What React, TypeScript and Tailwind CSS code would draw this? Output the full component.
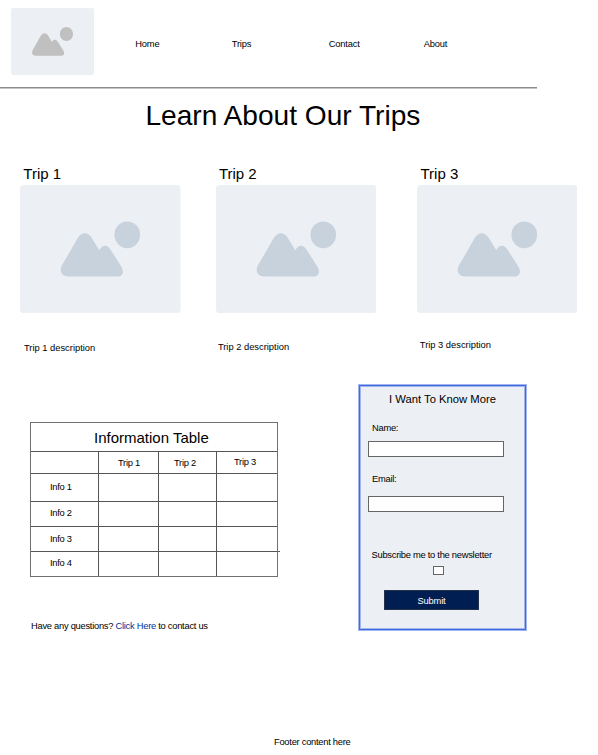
function Placeholder({ className, shape }: { className: string; shape: string }) {
  return (
    <svg viewBox="0 0 482 384" preserveAspectRatio="none" className={`block shrink-0 ${className}`}>
      <rect width="482" height="384" rx="12" fill="#eceff4" />
      <g className={shape}>
        <path d="M146 274C124 274 116 257 127 239L172 161C184 139 205 139 217 161L238 195C247 178 261 178 271 192L304 244C314 260 308 274 293 274Z" />
        <ellipse cx="322" cy="149" rx="38.5" ry="40" />
      </g>
    </svg>
  );
}

const trips = [
  { name: "Trip 1", card: "ml-[20.3px]", title: "ml-[3px]", text: "ml-[3.7px] mt-[29px]" },
  { name: "Trip 2", card: "ml-[35px]", title: "ml-[3px]", text: "ml-[2px] mt-[28px]" },
  { name: "Trip 3", card: "ml-[40.3px]", title: "ml-[3.7px]", text: "ml-[3px] mt-[26px]" },
];

const rows = [
  { name: "Info 1", size: "h-[28px]", pad: "pt-[7px]" },
  { name: "Info 2", size: "h-[25px]", pad: "pt-[5px]" },
  { name: "Info 3", size: "h-[25px]", pad: "pt-[6px]" },
  { name: "Info 4", size: "h-[25px]", pad: "pt-[5px]" },
];

function InfoTable() {
  return (
    <section className="relative mt-[38px] ml-[30px] h-[155px] w-[248px] shrink-0 border border-[#707070]">
      <h2 className="h-[28px] pt-[6px] pl-[63px] text-[15px] leading-[18px] tracking-normal">Information Table</h2>
      <div className="flex h-[22px] border-t border-[#555]">
        <div className="w-[67px]" />
        <div className="w-[60px] border-l border-[#555] pt-[5px] pl-[19px]">Trip 1</div>
        <div className="w-[58px] border-l border-[#555] pt-[5px] pl-[15px]">Trip 2</div>
        <div className="grow border-l border-[#555] pt-[4px] pl-[17px]">Trip 3</div>
      </div>
      {rows.map((row) => (
        <div key={row.name} className={`flex border-t border-[#555] ${row.size}`}>
          <div className={`w-[67px] pl-[19px] ${row.pad}`}>{row.name}</div>
          <div className="w-[60px] border-l border-[#555]" />
          <div className="w-[58px] border-l border-[#555]" />
          <div className="grow border-l border-[#555]" />
        </div>
      ))}
      <div className="absolute top-[128px] -right-[3px] h-px w-[2px] bg-[#555]" />
    </section>
  );
}

function ContactForm() {
  return (
    <form className="h-[247px] w-[169px] shrink-0 border border-[#a0b4f0] bg-[#eceff4]">
      <div className="h-full border border-[#4169e1]">
        <div className="flex h-full flex-col border border-[#a0b4ee]">
          <h2 className="mt-[5px] ml-[28px] text-[11.25px] leading-[14px] tracking-normal">I Want To Know More</h2>
          <label htmlFor="name" className="mt-[16px] ml-[11px]">Name:</label>
          <input id="name" className="mt-[7px] ml-[7px] h-[16px] w-[136px] border border-[#666] bg-white" />
          <label htmlFor="email" className="mt-[16px] ml-[11px]">Email:</label>
          <input id="email" className="mt-[11px] ml-[7px] h-[16px] w-[136px] border border-[#666] bg-white" />
          <label htmlFor="news" className="mt-[37px] ml-[10.5px]">Subscribe me to the newsletter</label>
          <input id="news" type="checkbox" className="mt-[5px] ml-[72px] h-[9px] w-[11px] appearance-none border border-[#666] bg-white" />
          <button type="button" className="mt-[15px] ml-[23px] h-[20px] w-[95px] border border-[#26324a] bg-[#001e52] pt-[2px] tracking-[-0.15px] text-white">
            Submit
          </button>
        </div>
      </div>
    </form>
  );
}

export default function App() {
  return (
    <div className="flex h-[755px] w-[598px] flex-col overflow-hidden bg-white font-['Liberation_Sans',Arial,sans-serif] text-[9.33px] leading-[12px] tracking-[-0.26px] whitespace-nowrap text-black">
      <header className="flex h-[89px] w-[537px] shrink-0 border-b border-[#c4c4c4]">
        <div className="flex grow border-b border-[#8c8c8c]">
          <Placeholder className="mt-[8.3px] ml-[11px] h-[67px] w-[83px]" shape="fill-[#c0c0c0]" />
          <nav className="flex pt-[38px] pl-[41.3px] tracking-[-0.2px]">
            <a className="w-[96.5px]">Home</a>
            <a className="w-[97px]">Trips</a>
            <a className="w-[95px]">Contact</a>
            <a>About</a>
          </nav>
        </div>
      </header>
      <main className="flex grow flex-col">
        <h1 className="mt-[11px] ml-[145.5px] text-[28.1px] leading-[32px] tracking-normal">Learn About Our Trips</h1>
        <section className="mt-[33px] flex h-[219px] shrink-0 tracking-normal">
          {trips.map((trip) => (
            <article key={trip.name} className={`w-[160.6px] shrink-0 ${trip.card}`}>
              <h2 className={`h-[19.5px] text-[15px] leading-[18px] ${trip.title}`}>{trip.name}</h2>
              <Placeholder className="h-[128.3px] w-[160.6px]" shape="fill-[#c8d2dd]" />
              <p className={trip.text}>{trip.name} description</p>
            </article>
          ))}
        </section>
        <div className="flex">
          <div className="w-[358px]">
            <InfoTable />
            <p className="mt-[43px] ml-[31px]">
              Have any questions? <a className="text-[#003399]">Click Here</a> to contact us
            </p>
          </div>
          <ContactForm />
        </div>
      </main>
      <footer className="h-[19px] pl-[274px]">Footer content here</footer>
    </div>
  );
}
